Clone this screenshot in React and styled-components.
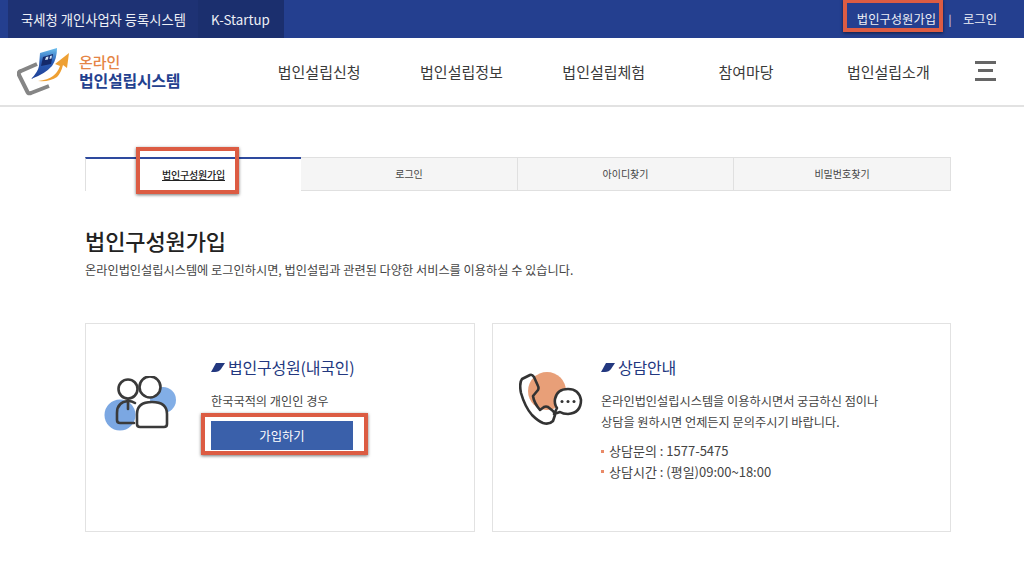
import React from "react";
import styled, { createGlobalStyle } from "styled-components";

const Global = createGlobalStyle`
  html, body { margin: 0; padding: 0; background: #fff; }
  body { font-family: "Noto Sans CJK KR", "Noto Sans", sans-serif; color: #333; width: 1024px; height: 579px; overflow: hidden; }
  * { box-sizing: border-box; }
`;

const Page = styled.div`width: 1024px; height: 579px; overflow: hidden;`;

const TopBar = styled.div`
  height: 38px; background: #243f8f; display: flex; justify-content: space-between; padding: 0 27px 0 8px;
`;
const TopLeft = styled.div`display: flex;`;
const TopTab = styled.a`
  height: 38px; display: flex; align-items: center; font-size: 13.3px; color: #eef0f6;
  padding: 0 13px; width: ${p => p.$w}px; background: ${p => p.$bg}; white-space: nowrap;
`;
const TopRight = styled.div`display: flex; align-items: center; font-size: 12.3px; color: #eef0f6; gap: 11.5px;`;
const Sep = styled.span`font-size: 11px; color: #e6e9f2; margin-left: 1px;`;
const Marked = styled.span`position: relative; display: inline-block;`;
const Mark = styled.span`
  position: absolute; left: ${p => p.$l}px; top: ${p => p.$t}px; width: ${p => p.$w}px; height: ${p => p.$h}px;
  border: 4px solid #dc5c43; box-shadow: 0 1px 3px rgba(0,0,0,.55); pointer-events: none;
`;

const Header = styled.div`
  height: 69px; border-bottom: 2px solid #e2e2e2; display: flex; align-items: center; padding: 0 28px 0 17px;
`;
const Logo = styled.div`display: flex; align-items: center; width: 230px; gap: 9px;`;
const LogoText = styled.div`display: flex; flex-direction: column;`;
const LogoTop = styled.span`font-size: 15px; line-height: 18px; font-weight: 500; color: #e58545;`;
const LogoBottom = styled.span`font-size: 16px; line-height: 19px; font-weight: 700; color: #23418f; letter-spacing: -.25px; white-space: nowrap;`;
const Nav = styled.nav`display: flex; margin-left: 1px;`;
const NavItem = styled.a`width: 142.3px; text-align: center; font-size: 15px; color: #3a3a3a; white-space: nowrap;`;
const Burger = styled.div`
  margin-left: auto; width: 21px; display: flex; flex-direction: column; align-items: center; gap: 5.5px; margin-bottom: 2px;
`;
const BurgerLine = styled.i`display: block; height: 3px; background: #666; width: ${p => p.$w}px;`;

const Main = styled.main`padding: 50px 73px 0 85px;`;
const Tabs = styled.div`display: grid; grid-template-columns: 216px 217px 216px 217px; height: 34px;`;
const Tab = styled.a`
  display: flex; align-items: center; justify-content: center; font-size: 10px; color: #444; position: relative;
  background: ${p => p.$active ? "#fff" : "#f5f5f5"};
  border-left: ${p => p.$active ? "1px solid #e0e0e0" : "none"};
  border-top: ${p => p.$active ? "2.5px solid #2e4a9e" : "1px solid #e0e0e0"};
  border-bottom: ${p => p.$active ? "none" : "1px solid #e0e0e0"};
  border-right: ${p => p.$active ? "none" : "1px solid #e0e0e0"};
  padding-bottom: ${p => p.$active ? 2 : 1}px;
`;
const ActiveLabel = styled.span`font-weight: 500; color: #222; text-decoration: underline; letter-spacing: -.2px;`;

const Title = styled.h1`margin: 33px 0 0; font-size: 22px; line-height: 32px; font-weight: 500; color: #222; letter-spacing: -.1px;`;
const Desc = styled.p`margin: 5px 0 0; font-size: 12.2px; line-height: 18px; color: #444; white-space: nowrap;`;

const Cards = styled.div`display: grid; grid-template-columns: 390px 459px; gap: 17px; margin-top: 44px;`;
const Card = styled.section`
  height: 209px; border: 1px solid #e2e2e2; display: flex; align-items: flex-start;
  padding: 32px 0 0 ${p => p.$left}px;
`;
const CardIcon = styled.div`flex: none; width: ${p => p.$w}px; margin-top: ${p => p.$mt}px;`;
const CardBody = styled.div`display: flex; flex-direction: column; align-items: flex-start;`;
const CardTitle = styled.h2`
  margin: 0; display: flex; align-items: center; gap: 3px; font-size: 16px; line-height: 22px; font-weight: 400;
  color: #23387f; letter-spacing: -.2px;
`;
const CardText = styled.p`margin: 13px 0 0; font-size: 12.2px; line-height: 21px; color: #444; white-space: nowrap;`;
const Btn = styled.a`
  display: flex; align-items: center; justify-content: center; width: 142px; height: 29px; margin-top: 9px;
  background: #3a60aa; color: #fff; font-size: 12.3px;
`;
const BtnWrap = styled.div`position: relative;`;
const InfoList = styled.ul`margin: 8px 0 0; padding: 0; list-style: none;`;
const InfoItem = styled.li`
  display: flex; align-items: center; gap: 5px; font-size: 13px; line-height: 20.5px; color: #444; white-space: nowrap;
  &::before { content: ""; width: 3px; height: 3px; background: #e98a68; }
`;

const Slash = () => (
  <svg width="14" height="9" viewBox="0 0 14 9"><path d="M5 0H14L10 6Q8 9 4 9H0Z" fill="#23387f" /></svg>
);

const LogoMark = () => (
  <svg width="53" height="50" viewBox="0 0 53 50">
    <defs>
      <linearGradient id="lg" x1="0" y1="0" x2="0" y2="1">
        <stop offset="0" stopColor="#6cc0ee" />
        <stop offset=".45" stopColor="#2a5cb5" />
        <stop offset="1" stopColor="#1f3f95" />
      </linearGradient>
    </defs>
    <path d="M20 17 L4 24 Q1 25 2 28 L10 44 Q11 47 14 46 L32 39" fill="none" stroke="#858585" strokeWidth="4" strokeLinejoin="round" />
    <path d="M23 6 L40 1 Q40 12 35 19 Q28 27 14 32 Q21 25 22 19 Z" fill="url(#lg)" />
    <path d="M26 10 L36 7 L34 17 L24 19Z" fill="#14296a" />
    <path d="M29 10 L28 13 L31 12.500 L31.500 9.500Z M33 9 L32.500 12 L34.500 11.500 L35 8.500Z" fill="#cfe0f4" />
    <path d="M21 34 Q31 33 36 29 Q41 25 43 19 L38 17 L52 6 L50 21 L46 18 Q44 26 40 30 Q33 35 21 34Z" fill="#eea033" />
  </svg>
);

const People = () => (
  <svg width="74" height="60" viewBox="0 0 74 60" style={{ display: "block" }}>
    <circle cx="16" cy="39" r="15.500" fill="#7ba7e2" />
    <circle cx="59" cy="24" r="13" fill="#82aee6" />
    <g fill="none" stroke="#3a3a3a" strokeWidth="2.6" strokeLinejoin="round" strokeLinecap="round">
      <path d="M33 38 Q33 26 48 26 Q63 26 63 38 V48 Q63 51 60 51 H36 Q33 51 33 48Z" fill="#fff" />
      <circle cx="46" cy="11" r="10.500" fill="#fff" />
      <path d="M31 27 Q28 25 24 25 Q13 26 13 37 V44 Q13 47 16 47 H30" />
      <circle cx="24" cy="13" r="9.500" fill="#ffffff" fillOpacity=".9" />
      <path d="M24 23 V33" />
    </g>
  </svg>
);

const Phone = () => (
  <svg width="66" height="60" viewBox="0 0 66 60" style={{ display: "block" }}>
    <circle cx="28" cy="20" r="19" fill="#e89f78" />
    <g fill="none" stroke="#333" strokeWidth="2.6" strokeLinejoin="round" strokeLinecap="round">
      <path d="M11 4 L3 8 Q0 12 2 22 Q6 36 13 44 Q19 50 24 52 Q30 54 34 50 L36 44 Q36 42 34 40 L29 36 Q27 35 25 36 L21 39 Q15 32 14 25 L19 19 Q20 17 19 15 L15 6 Q13 3 11 4Z" />
      <path d="M49 18 Q60 18 62 29 Q62 42 49 43 Q44 43 41 41 L35 43 L38 37 Q35 33 36 28 Q38 18 49 18Z" fill="#fff" />
    </g>
    <g fill="#333"><circle cx="43" cy="30.500" r="1.500" /><circle cx="49" cy="30.500" r="1.500" /><circle cx="55" cy="30.500" r="1.500" /></g>
  </svg>
);

export default function App() {
  return (
    <Page>
      <Global />
      <TopBar>
        <TopLeft>
          <TopTab $w={190} $bg="#1e3274">국세청 개인사업자 등록시스템</TopTab>
          <TopTab $w={86} $bg="#1b2f6e">K-Startup</TopTab>
        </TopLeft>
        <TopRight>
          <Marked>법인구성원가입<Mark $l={-14} $t={-11} $w={100} $h={33} /></Marked>
          <Sep>|</Sep>
          <span>로그인</span>
        </TopRight>
      </TopBar>
      <Header>
        <Logo>
          <LogoMark />
          <LogoText>
            <LogoTop>온라인</LogoTop>
            <LogoBottom>법인설립시스템</LogoBottom>
          </LogoText>
        </Logo>
        <Nav>
          <NavItem>법인설립신청</NavItem>
          <NavItem>법인설립정보</NavItem>
          <NavItem>법인설립체험</NavItem>
          <NavItem>참여마당</NavItem>
          <NavItem>법인설립소개</NavItem>
        </Nav>
        <Burger>
          <BurgerLine $w={21} />
          <BurgerLine $w={15} />
          <BurgerLine $w={21} />
        </Burger>
      </Header>
      <Main>
        <Tabs>
          <Tab $active>
            <ActiveLabel>법인구성원가입</ActiveLabel>
            <Mark $l={50} $t={-12} $w={103} $h={47} />
          </Tab>
          <Tab>로그인</Tab>
          <Tab>아이디찾기</Tab>
          <Tab>비밀번호찾기</Tab>
        </Tabs>
        <Title>법인구성원가입</Title>
        <Desc>온라인법인설립시스템에 로그인하시면, 법인설립과 관련된 다양한 서비스를 이용하실 수 있습니다.</Desc>
        <Cards>
          <Card $left={18}>
            <CardIcon $w={107} $mt={20}><People /></CardIcon>
            <CardBody>
              <CardTitle><Slash />법인구성원(내국인)</CardTitle>
              <CardText>한국국적의 개인인 경우</CardText>
              <BtnWrap>
                <Btn>가입하기</Btn>
                <Mark $l={-10} $t={1} $w={167} $h={42} />
              </BtnWrap>
            </CardBody>
          </Card>
          <Card $left={26}>
            <CardIcon $w={82} $mt={15}><Phone /></CardIcon>
            <CardBody>
              <CardTitle><Slash />상담안내</CardTitle>
              <CardText>온라인법인설립시스템을 이용하시면서 궁금하신 점이나<br />상담을 원하시면 언제든지 문의주시기 바랍니다.</CardText>
              <InfoList>
                <InfoItem>상담문의 : 1577-5475</InfoItem>
                <InfoItem>상담시간 : (평일)09:00~18:00</InfoItem>
              </InfoList>
            </CardBody>
          </Card>
        </Cards>
      </Main>
    </Page>
  );
}
